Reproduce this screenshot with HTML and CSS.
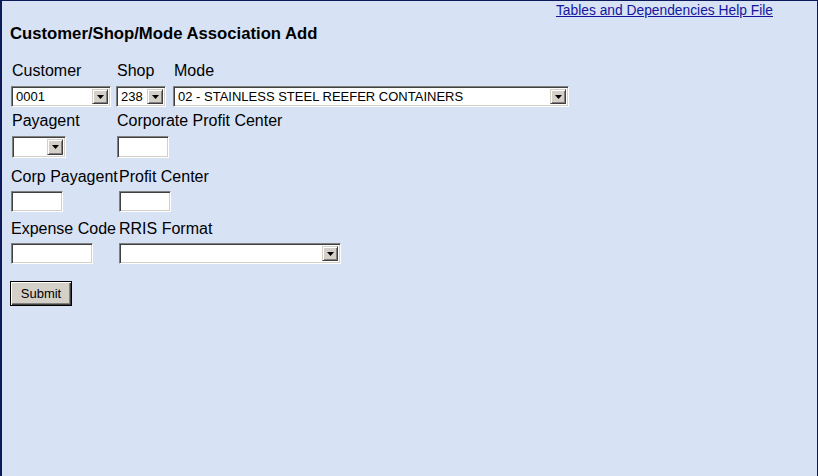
FILE: index.html
```html
<!DOCTYPE html>
<html>
<head>
<meta charset="utf-8">
<title>Customer/Shop/Mode Association Add</title>
<link rel="stylesheet" href="styles.css">
</head>
<body>
<div class="page">
  <div class="toplink"><a href="#">Tables and Dependencies Help File</a></div>
  <h1 class="title">Customer/Shop/Mode Association Add</h1>

  <div class="row row1">
    <div class="cell c-cust">
      <div class="lbl">Customer</div>
      <div class="sel w-cust"><span class="val">0001</span><span class="btn"><svg width="7" height="4" viewBox="0 0 7 4"><polygon points="0,0 7,0 3.5,4" fill="#000"/></svg></span></div>
    </div>
    <div class="cell c-shop">
      <div class="lbl">Shop</div>
      <div class="sel w-shop"><span class="val">238</span><span class="btn"><svg width="7" height="4" viewBox="0 0 7 4"><polygon points="0,0 7,0 3.5,4" fill="#000"/></svg></span></div>
    </div>
    <div class="cell">
      <div class="lbl">Mode</div>
      <div class="sel w-mode"><span class="val">02 - STAINLESS STEEL REEFER CONTAINERS</span><span class="btn"><svg width="7" height="4" viewBox="0 0 7 4"><polygon points="0,0 7,0 3.5,4" fill="#000"/></svg></span></div>
    </div>
  </div>

  <div class="row row2">
    <div class="cell c-pay">
      <div class="lbl">Payagent</div>
      <div class="sel w-pay"><span class="val"></span><span class="btn"><svg width="7" height="4" viewBox="0 0 7 4"><polygon points="0,0 7,0 3.5,4" fill="#000"/></svg></span></div>
    </div>
    <div class="cell">
      <div class="lbl">Corporate Profit Center</div>
      <div class="inp w-cpc"></div>
    </div>
  </div>

  <div class="row row3">
    <div class="cell c-wide">
      <div class="lbl">Corp Payagent</div>
      <div class="inp w-cpa"></div>
    </div>
    <div class="cell">
      <div class="lbl">Profit Center</div>
      <div class="inp w-pc"></div>
    </div>
  </div>

  <div class="row row4">
    <div class="cell c-wide">
      <div class="lbl">Expense Code</div>
      <div class="inp w-exp"></div>
    </div>
    <div class="cell">
      <div class="lbl">RRIS Format</div>
      <div class="sel w-rris"><span class="val"></span><span class="btn"><svg width="7" height="4" viewBox="0 0 7 4"><polygon points="0,0 7,0 3.5,4" fill="#000"/></svg></span></div>
    </div>
  </div>

  <div class="submit-row"><button class="submit" type="button">Submit</button></div>
</div>
</body>
</html>
```

FILE: styles.css
```css
html, body {
  margin: 0;
  padding: 0;
}
body {
  background: #d7e2f5;
  font-family: "Liberation Sans", Arial, sans-serif;
  color: #000;
}
.page {
  box-sizing: border-box;
  width: 818px;
  height: 476px;
  border-top: 1px solid #0c1a5c;
  border-left: 2px solid #0c1a5c;
  border-right: 1px solid #0c1a5c;
  background: #d7e2f5;
  overflow: hidden;
}
.toplink {
  display: flex;
  justify-content: flex-end;
  padding-top: 2px;
  padding-right: 44px;
  font-size: 13.8px;
  line-height: 16px;
}
.toplink a {
  color: #15159e;
  text-decoration: underline;
}
.title {
  margin: 5px 0 0 8px;
  font-size: 16.7px;
  line-height: 20px;
  font-weight: bold;
}
.row {
  display: flex;
}
.cell {
  display: flex;
  flex-direction: column;
  align-items: flex-start;
}
.lbl {
  font-size: 16px;
  line-height: 18px;
  white-space: nowrap;
  padding-left: 0;
}
.row1 { margin-top: 18px; padding-left: 9px; }
.row1 .lbl { margin-bottom: 6px; padding-left: 1px; }
.row2 { margin-top: 5px; padding-left: 10px; }
.row2 .lbl { margin-bottom: 6px; }
.row3 { margin-top: 10px; padding-left: 9px; }
.row3 .lbl { margin-bottom: 5px; }
.row4 { margin-top: 8px; padding-left: 9px; }
.row4 .lbl { margin-bottom: 5px; }

.c-cust { width: 105px; }
.c-shop { width: 57px; }
.c-pay { width: 105px; }
.c-wide { width: 108px; }

/* classic inset field */
.sel, .inp {
  box-sizing: border-box;
  height: 21px;
  background: #fff;
  border: 1px solid;
  border-color: #808080 #ffffff #ffffff #808080;
  box-shadow: inset 1px 1px 0 #404040, inset -1px -1px 0 #d4d0c8;
}
.sel {
  display: flex;
  align-items: stretch;
  padding: 2px;
  font-size: 13px;
}
.val {
  flex: 1;
  display: flex;
  align-items: center;
  padding-left: 2px;
  white-space: nowrap;
  overflow: hidden;
  line-height: 15px;
}
.btn {
  box-sizing: border-box;
  width: 16px;
  flex: none;
  display: flex;
  align-items: center;
  justify-content: center;
  background: #d4d0c8;
  border: 1px solid;
  border-color: #d4d0c8 #404040 #404040 #d4d0c8;
  box-shadow: inset 1px 1px 0 #ffffff, inset -1px -1px 0 #808080;
}
.btn svg { display: block; }

.w-cust { width: 100px; }
.w-shop { width: 50px; }
.w-mode { width: 396px; }
.w-pay { width: 54px; height: 22px; }
.w-cpc { width: 52px; height: 22px; }
.w-cpa { width: 52px; }
.w-pc { width: 52px; }
.w-exp { width: 82px; }
.w-rris { width: 222px; }

.submit-row {
  margin-top: 17px;
  padding-left: 8px;
}
.submit {
  box-sizing: border-box;
  width: 62px;
  height: 25px;
  padding: 0;
  margin: 0;
  font-family: "Liberation Sans", Arial, sans-serif;
  font-size: 13px;
  color: #000;
  background: #d4d0c8;
  border: 1px solid #000;
  border-radius: 0;
  box-shadow: inset 1px 1px 0 #ffffff, inset -1px -1px 0 #404040, inset -2px -2px 0 #808080;
}
```
